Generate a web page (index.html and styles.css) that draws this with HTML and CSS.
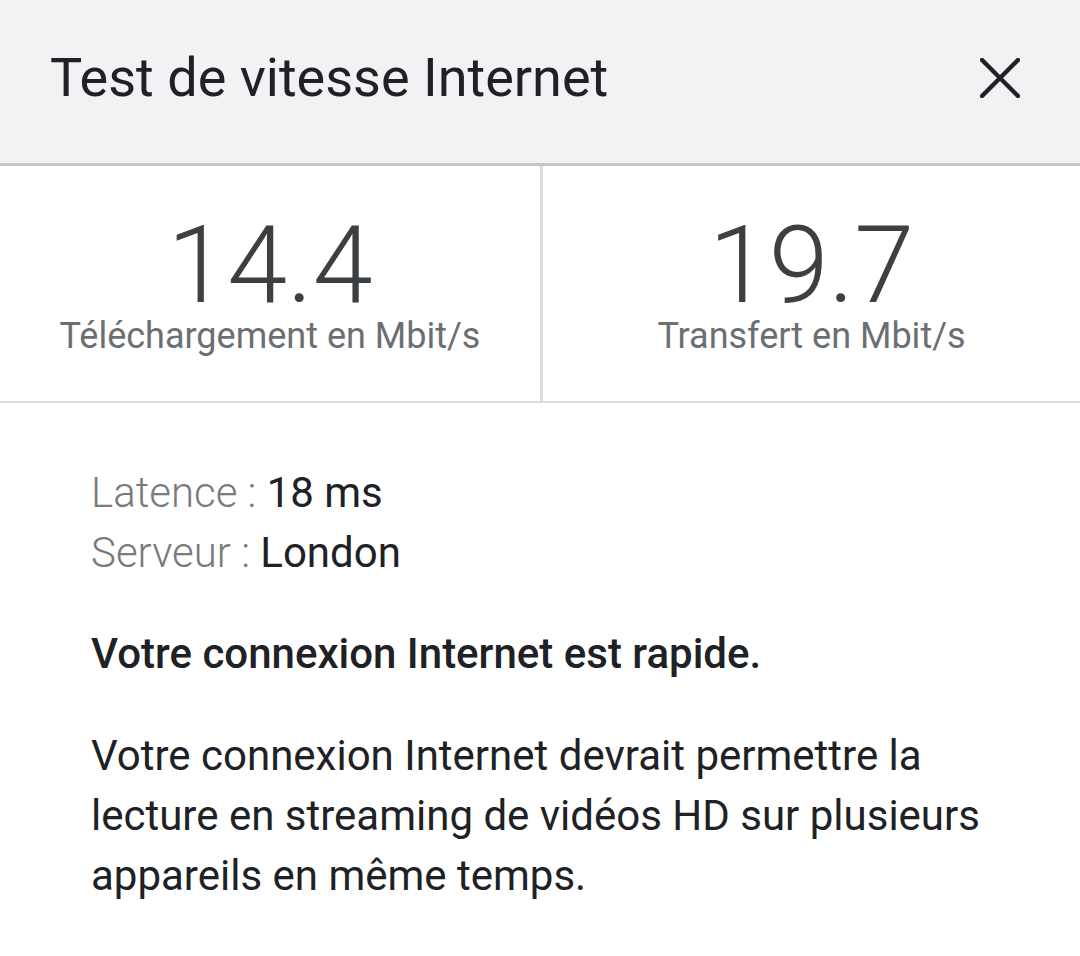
FILE: index.html
```html
<!DOCTYPE html>
<html lang="fr">
<head>
<meta charset="utf-8">
<title>Test de vitesse Internet</title>
<link rel="stylesheet" href="styles.css">
</head>
<body>
<div class="dialog">
  <header class="header">
    <h1 class="title">Test de vitesse Internet</h1>
    <button class="close" aria-label="Fermer">
      <svg viewBox="0 0 40 40" width="40" height="40"><path d="M2 2 L38 38 M38 2 L2 38" stroke="#202124" stroke-width="4.4" stroke-linecap="square" fill="none"/></svg>
    </button>
  </header>
  <section class="stats">
    <div class="stat">
      <div class="value">14.4</div>
      <div class="unit">Téléchargement en Mbit/s</div>
    </div>
    <div class="stat">
      <div class="value">19.7</div>
      <div class="unit">Transfert en Mbit/s</div>
    </div>
  </section>
  <section class="details">
    <div class="info">
      <div class="row"><span class="key">Latence : </span><span class="val">18 ms</span></div>
      <div class="row"><span class="key">Serveur : </span><span class="val">London</span></div>
    </div>
    <p class="verdict">Votre connexion Internet est rapide.</p>
    <p class="desc">Votre connexion Internet devrait permettre la lecture en streaming de vidéos HD sur plusieurs appareils en même temps.</p>
  </section>
</div>
</body>
</html>
```

FILE: styles.css
```css
html, body {
  margin: 0;
  padding: 0;
  background: #ffffff;
}
body {
  font-family: Roboto, "Noto Sans", sans-serif;
  color: #202124;
}
.dialog {
  width: 1080px;
}
.header {
  height: 166px;
  box-sizing: border-box;
  background: #f1f2f4;
  border-bottom: 3px solid #c4c5c8;
  display: flex;
  align-items: center;
  justify-content: space-between;
  padding: 0 60px 8px 50px;
}
.title {
  margin: 0;
  font-size: 54px;
  font-weight: 400;
  line-height: 56px;
  color: #202124;
}
.close {
  border: 0;
  background: transparent;
  padding: 0;
  width: 40px;
  height: 40px;
  display: flex;
}
.stats {
  display: grid;
  grid-template-columns: 540px 3px 1fr;
  border-bottom: 2px solid #dcdcdc;
}
.stats .stat:first-child {
  border-right: 3px solid #dcdcdc;
  grid-column: 1 / 3;
}
.stat {
  display: flex;
  flex-direction: column;
  align-items: center;
  padding: 49px 0 46px;
}
.value {
  font-size: 108px;
  font-weight: 300;
  line-height: 100px;
  color: #3c4043;
}
.unit {
  margin-top: 2px;
  font-size: 36px;
  line-height: 38px;
  color: #6c6f72;
}
.details {
  padding: 60px 91px 0 91px;
}
.row {
  font-size: 42px;
  line-height: 60px;
}
.key {
  font-weight: 300;
  color: #7a7a7a;
}
.val {
  color: #202124;
}
.verdict {
  margin: 41px 0 0;
  font-size: 42px;
  line-height: 60px;
  font-weight: 500;
}
.desc {
  margin: 42px 0 0;
  font-size: 42px;
  line-height: 60px;
}
```
